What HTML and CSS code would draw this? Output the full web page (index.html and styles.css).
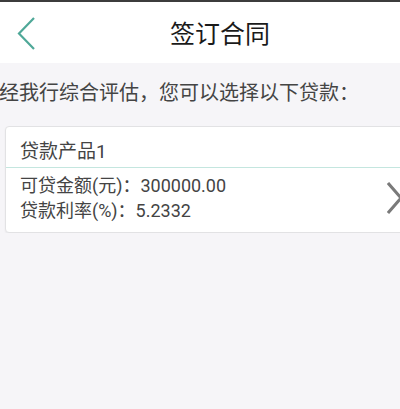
FILE: index.html
```html
<!DOCTYPE html>
<html>
<head>
  <meta charset="utf-8">
  <title>签订合同</title>
  <link rel="stylesheet" href="styles.css">
</head>
<body>
  <div class="header">
    <a href="#" class="back">
      <svg width="20" height="34" viewBox="0 0 20 34">
        <polyline points="17,1 2,16.5 17,32" fill="none" stroke="#4fa898" stroke-width="2.2"/>
      </svg>
    </a>
    <h1>签订合同</h1>
  </div>

  <p class="intro">经我行综合评估，您可以选择以下贷款：</p>

  <div class="loan-card">
    <div class="loan-title">贷款产品1</div>
    <div class="loan-body">
      <div class="loan-info">
        <div>可贷金额(元)：300000.00</div>
        <div>贷款利率(%)：5.2332</div>
      </div>
      <svg class="arrow" width="16" height="32" viewBox="0 0 16 32">
        <polyline points="1,1 14,16 1,31" fill="none" stroke="#7a7a7a" stroke-width="3"/>
      </svg>
    </div>
  </div>
</body>
</html>
```

FILE: styles.css
```css
body {
  margin: 0;
  background-color: #f6f5f8;
  font-family: Roboto, "Noto Sans CJK SC", sans-serif;
  color: #3a3a3a;
  overflow-x: hidden;
}
.header {
  display: flex;
  align-items: center;
  justify-content: center;
  height: 61px;
  padding-left: 40px;
  border-top: 2px solid #3c3c3c;
  background-color: #fff;
  position: relative;
}
.back {
  position: absolute;
  left: 17px;
  top: 15px;
  line-height: 0;
}
.header h1 {
  margin: 0 0 2px;
  font-size: 25px;
  font-weight: normal;
  color: #1a1a1a;
}
.intro {
  margin: 16px 0 0 -1px;
  font-size: 20px;
  line-height: 28px;
  color: #444;
}
.loan-card {
  margin: 19px -20px 0 5px;
  background-color: #fff;
  border: 1px solid #e2e2e4;
  border-radius: 4px;
  box-shadow: 0 1px 2px rgba(0, 0, 0, 0.05);
}
.loan-title {
  padding: 12px 0 2px 14px;
  font-size: 19px;
  line-height: 26px;
  color: #444;
  border-bottom: 1px solid #c4e6df;
}
.loan-body {
  display: flex;
  align-items: center;
  padding: 5px 0 9px 14px;
}
.loan-info {
  flex: 1;
  font-size: 18px;
  line-height: 25px;
  color: #444;
}
.arrow {
  margin-right: 16px;
}
```
